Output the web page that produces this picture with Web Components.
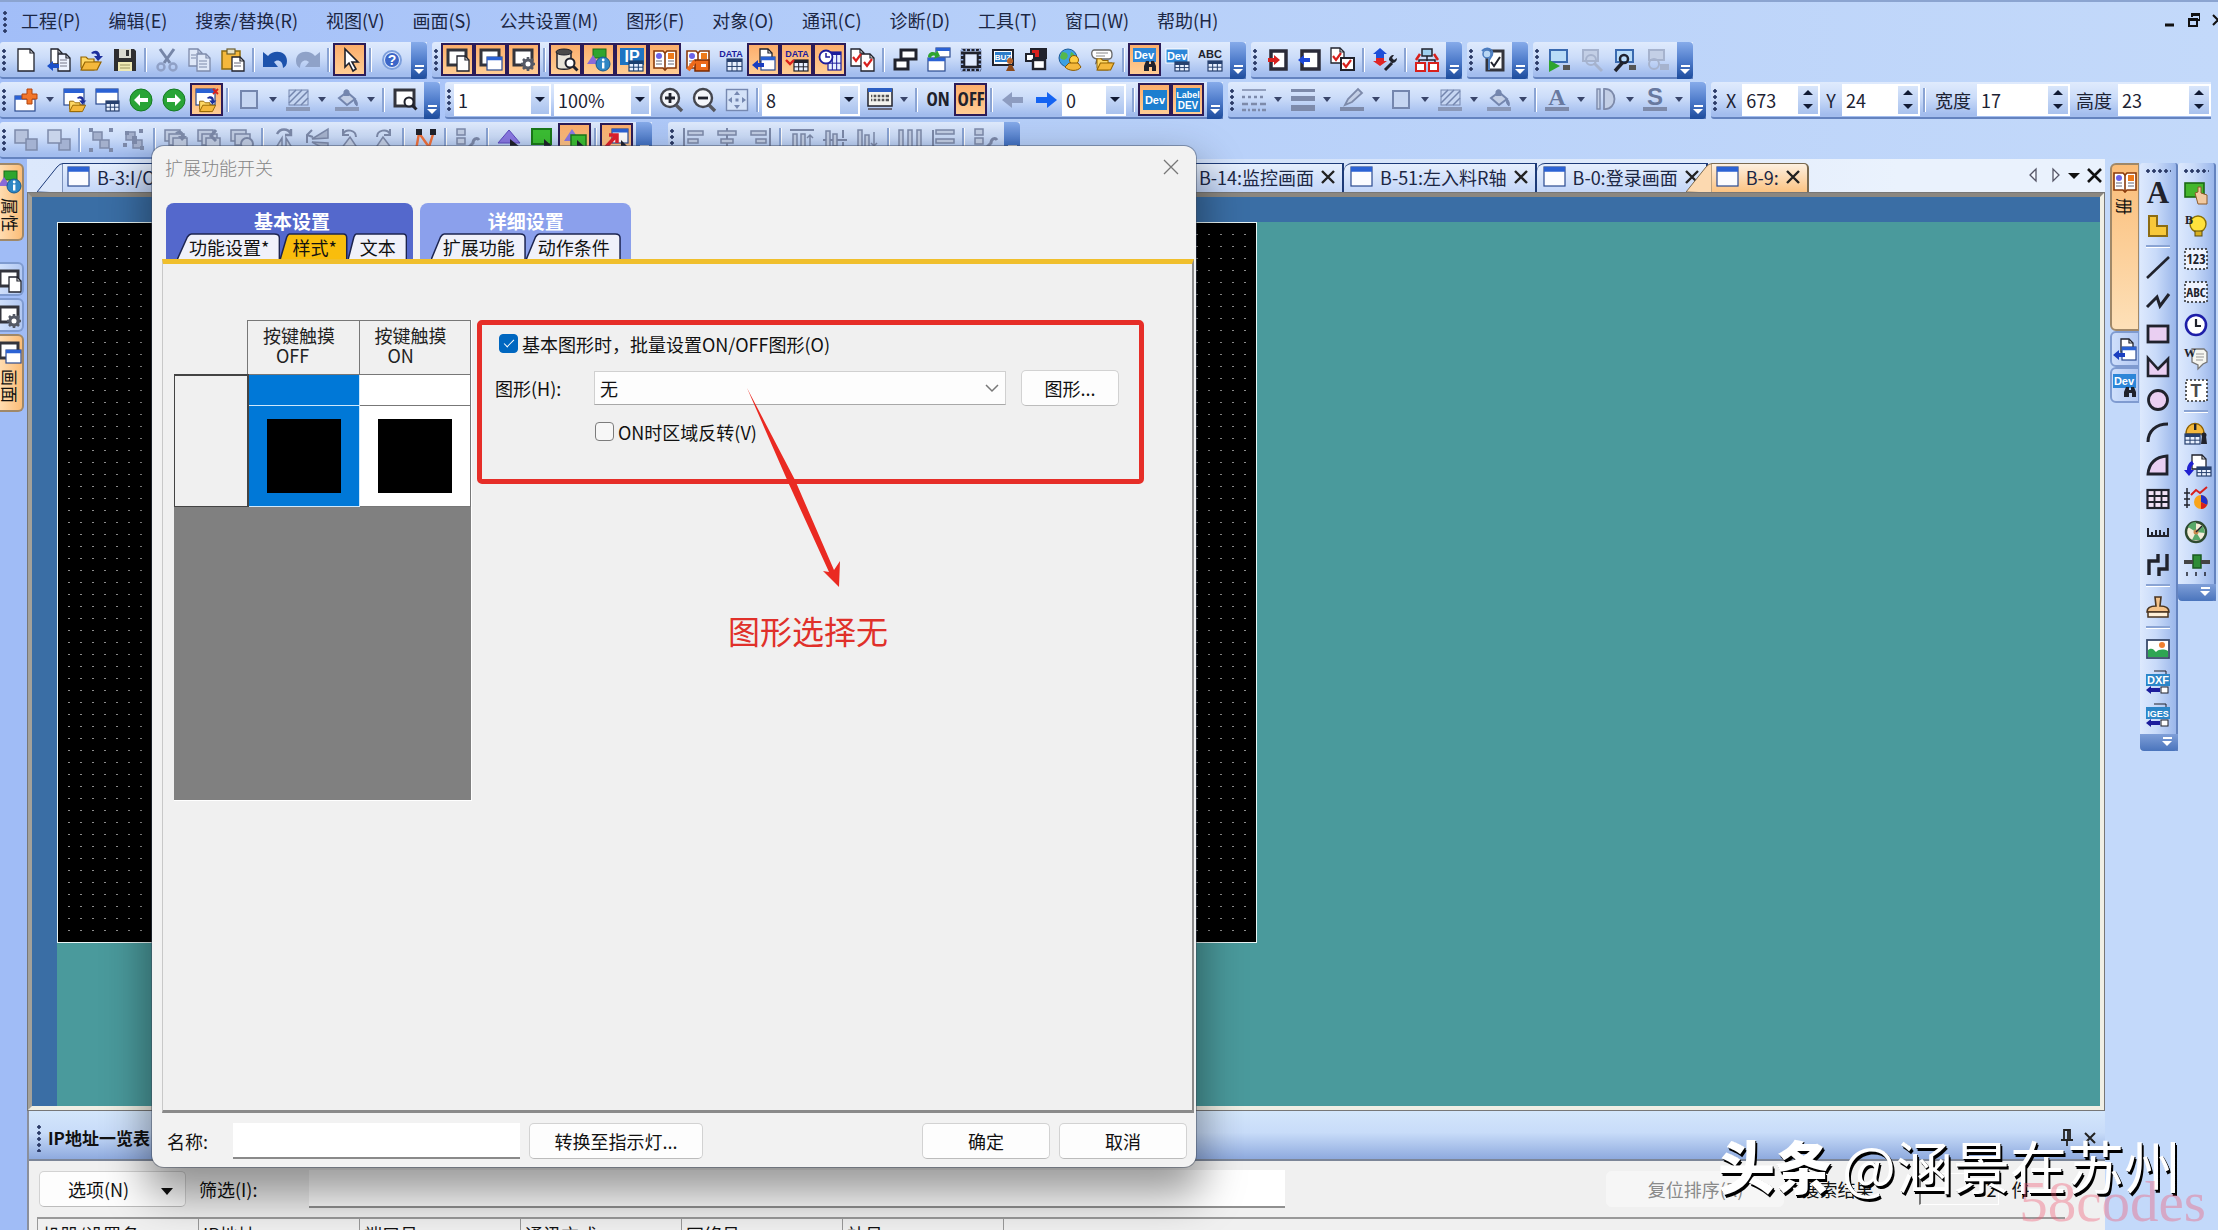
<!DOCTYPE html>
<html lang="zh-CN">
<head>
<meta charset="utf-8">
<title>扩展功能开关</title>
<style>
  html, body { height: 100%; margin: 0; }
  body {
    overflow: hidden;
    font: 18px/24px "Noto Sans CJK SC", "Noto Sans", sans-serif;
    color: #1c2233;
  }
</style>
</head>
<body>
<gx-app></gx-app>

<script>
// ---------- icons, all on a 24 x 24 grid ----------
const K = '#20222c', G = '#7d8aaa', LG = '#c3cfe6', B = '#2b62d4', N = '#1c1c9c', O = '#f4b83c', R = '#d8201c', V = '#2ea52e', W = '#fff';

const r = (x, y, w, h, f = 'none', s = 'none', sw = 1.5) =>
  `<rect x="${x}" y="${y}" width="${w}" height="${h}" fill="${f}" stroke="${s}" stroke-width="${sw}"/>`;
const p = (d, f = 'none', s = 'none', sw = 1.5) =>
  `<path d="${d}" fill="${f}" stroke="${s}" stroke-width="${sw}"/>`;
const c = (x, y, q, f = 'none', s = 'none', sw = 1.5) =>
  `<circle cx="${x}" cy="${y}" r="${q}" fill="${f}" stroke="${s}" stroke-width="${sw}"/>`;
const t = (x, y, size, f, s, extra = '') =>
  `<text x="${x}" y="${y}" font-size="${size}" fill="${f}" font-weight="700" text-anchor="middle" ${extra}>${s}</text>`;

const page = (x, y, w, h, s = K, f = W) => p(`M${x} ${y}h${w - 4}l4 4v${h - 4}h-${w}z`, f, s, 1.3) + p(`M${x + w - 4} ${y}v4h4`, 'none', s, 1.2);
const win = (x, y, w, h, s = '#2a4a90', f = W, bar = B) => r(x, y, w, h, f, s, 1.2) + r(x, y, w, Math.max(3, h / 4), bar);
const grid = (x, y, w, h, s = '#27406e', f = '#e8f0ff') => r(x, y, w, h, f, s, 1.2) + r(x, y, w, 3, s) +
  p(`M${x + w / 3} ${y}v${h}M${x + w * 2 / 3} ${y}v${h}M${x} ${y + h * .62}h${w}`, 'none', s, 1);
const folder = (x, y) => p(`M${x} ${y + 11}v-10h5l2 2h6v3h4l-4 8h-12z`, '#ffd966', '#946400', 1.2) + p(`M${x} ${y + 14}l4-8h16l-4 8z`, O, '#946400', 1.2);
const swoop = p('M11 5c4-4 9-2 9 3h3l-5 5-4-5h3c0-2-2-3-4-2z', '#1d2f9c');
const lens = (x, y, q, s = K) => c(x, y, q, W, s, 2) + p(`M${x + q - 1} ${y + q - 1}l4 4`, 'none', s, 3);
const dark = (x, y, w, h) => r(x, y, w, h, W, '#33343c', 3);
const gear = (x, y, s = '#555a66') => c(x, y, 4, W, s, 3) + p(`M${x} ${y - 7}v3M${x} ${y + 4}v3M${x - 7} ${y}h3M${x + 4} ${y}h3M${x - 5} ${y - 5}l2 2M${x + 3} ${y + 3}l2 2M${x + 5} ${y - 5}l-2 2M${x - 3} ${y + 3}l-2 2`, 'none', s, 2.6);
const wrench = (s = K) => p('M12 22l7-7', 'none', s, 3) + p('M16 12c0-3 2-5 5-5l-2 3 2 2 3-2c0 4-3 5-5 5z', s);
const arrowL = (x, y, f = N) => p(`M${x} ${y}l6-5v3h6v4h-6v3z`, f);
const arrowR = (x, y, f = R) => p(`M${x} ${y}l-6-5v3h-6v4h6v3z`, f);
const tick = (x, y) => p(`M${x} ${y}l3 4 5-7`, 'none', R, 2.2);
const finder = (x, y) => p(`M${x} ${y + 10}v-5l2-5h3v3h2v-3h3l2 5v5h-4v-4h-3v4z`, K);
const info = c(16, 16, 7, '#2f86c4', '#155a90', 1) + r(15, 14.5, 2.4, 6, W) + c(16.2, 12, 1.4, W);
const hatch = (s, f) => r(3, 2, 19, 15, f, s, 1) + p('M3 9l7-7M3 15l13-13M8 17l14-14M15 17l7-7', 'none', s, 1.5);
const bucket = s => p('M4 10l8-6 8 7-8 6z', LG, s, 2) + p('M9 8V4c0-3 5-3 5 0v4M19 10c3 2 4 6 3 8-2-1-3-4-3-8z', s, s, 1);
const bar = s => r(0, 19, 24, 4, s);
const book = (x = 0, y = 0) => `<g transform="translate(${x} ${y})">` + p('M1 3h9l2 2 2-2h9v17h-9l-2 2-2-2H1z', W, '#8a3a0a', 1.6) + p('M12 5v16', 'none', '#8a3a0a', 1.6) + c(6, 8, 3, '#6b64e8') + r(15, 5, 6, 6, '#ee7a1a') + p('M3 13h6M3 16h6M15 13h6M15 16h6', 'none', '#667', 1) + '</g>';
const nodes = p('M4 4h9v8H4zM11 12h9v8h-9z', '#a4b0cc', G);

const ICONS = {
  new: page(4, 1, 16, 22),
  transfer: page(4, 1, 11, 15) + page(11, 6, 12, 17, K, '#eef3ff') + p('M13 12h7M13 15h7M13 18h7', 'none', '#778', 1) + arrowL(0, 18, '#1b50c8'),
  open: folder(1, 8) + swoop,
  save: p('M1 1h20l2 2v20H1z', '#2e2e30') + r(6, 1, 12, 9, '#d9d9d0') + r(13, 2, 3, 6, '#2e2e30') + r(5, 14, 14, 9, '#efe9b4') + p('M7 17h10M7 20h10', 'none', '#9a9460', 1),
  cut: p('M5 1l10 14M19 1L9 15', 'none', '#7686a8', 3) + c(6, 19, 3.5, 'none', '#8fa0c6', 2.4) + c(18, 19, 3.5, 'none', '#8fa0c6', 2.4),
  copy: page(1, 1, 13, 17, G, '#dfe8f8') + page(9, 6, 13, 17, G, '#dfe8f8') + p('M11 13h8M11 16h8M11 19h8M3 7h5M3 10h5', 'none', G, 1),
  paste: r(1, 3, 18, 18, O, '#8d6c12', 1.5) + r(6, 1, 8, 5, '#e6e2c8', '#6a5c2c', 1.2) + page(11, 9, 12, 14) + p('M13 15h7M13 18h7', 'none', '#667', 1),
  undo: p('M0 4l5 4c6-7 19-5 19 5 0 4-2 6-4 7 0-8-6-9-9-6l4 5H0z', '#1c52ac'),
  redo: p('M24 4l-5 4C13 1 0 3 0 13c0 4 2 6 4 7 0-8 6-9 9-6l-4 5h15z', '#8fa2c8'),
  cursor: p('M7 1v18l4-4 4 8 3-2-4-7h6z', W, K, 1.6),
  help: c(12, 12, 9, '#dce8fb', '#7d9fdc', 2) + c(12, 12, 7, '#3c66c8') + t(12, 17, 14, W, '?'),
  winPage: dark(2, 2, 18, 15) + page(11, 8, 12, 15),
  winWin: dark(2, 2, 18, 15) + win(8, 9, 15, 13),
  winGear: dark(2, 2, 18, 15) + gear(16, 16),
  dbFind: p('M3 4v15c0 3 14 3 14 0V4', '#e7e3d8', K, 1.5) + `<ellipse cx="10" cy="4" rx="8" ry="3" fill="#4a4a4a" stroke="${K}"/>` + lens(16, 15, 4.5),
  props: r(6, 1, 13, 9, V, '#1a6a1a', 1) + p('M0 16l6-9 6 9z', '#8a6ad8') + info,
  ip: r(0, 0, 24, 17, '#1f74c2') + t(12, 14, 16, W, 'IP') + grid(9, 13, 14, 10, '#1a3f70'),
  book: book(),
  bookParts: book() + r(9, 12, 14, 11, '#ee6a1a', '#7a2a00') + p('M2 22l7-9', 'none', '#ee6a1a', 4) + r(15, 16, 5, 3, W),
  data: t(12, 9, 9, N, 'DATA') + grid(8, 11, 15, 12),
  dataOut: page(8, 1, 12, 13) + win(9, 9, 14, 13) + arrowL(0, 17, '#1b3fc0'),
  dataCheck: t(12, 9, 9, N, 'DATA') + grid(9, 12, 14, 11, K) + p('M1 12l4 4 4-4', 'none', R, 2.4),
  dataClock: grid(10, 4, 13, 18, N) + c(8, 9, 6.5, W, N, 1.8) + p('M8 5v4h4', 'none', N, 1.5),
  checks: page(0, 1, 13, 17) + page(10, 6, 13, 17) + tick(2, 9) + tick(13, 14),
  cascade: r(8, 2, 15, 9, W, K, 3) + r(2, 12, 13, 9, W, K, 3),
  swap: win(10, 0, 14, 9) + win(2, 10, 17, 13) + p('M2 9c0-5 5-6 8-4l1-3 3 6-6 3 1-3c-2-1-4 0-4 2z', V),
  chip: r(5, 5, 14, 14, '#e2ecff', K, 2.6) + p('M3 2v20M21 2v20M2 2h20M2 22h20', 'none', K, 2.4) + '<path d="M3 2v20M21 2v20M2 2h20M2 22h20" fill="none" stroke="#9ab4ea" stroke-width="2.6" stroke-dasharray="1.5 3"/>',
  buzzer: r(1, 2, 20, 15, W, K, 2) + r(3, 4, 16, 10, '#2c7cc8') + t(11, 12, 8, W, 'BUZ') + c(18, 13, 3, '#b8642a') + p('M14 23l3-6h3l3 6', '#8c4a1a'),
  blocks: r(6, 1, 15, 9, R, K, 2) + r(14, 1, 7, 9, K) + r(1, 6, 8, 7, W, K, 2) + r(8, 12, 12, 9, W, K, 2.4),
  globe: c(10, 10, 9, '#3da0e0', '#1c5a98', 1) + p('M4 4c5 0 7 3 5 6s-6 2-7-1zM13 4c3 1 4 4 3 6l-4-2z', '#55b84a') + c(16, 12, 4.5, '#ffce42', '#8a5a00', 1) + p('M7 19c3 4 13 5 16 0l-3-4h-9z', O, '#8a5a00', 1),
  speech: p('M3 2h15c4 0 4 9 0 9h-8l-5 4 1-4C-1 10 0 2 3 2z', W, '#666', 1.3) + p('M5 5h12M5 8h9', 'none', '#888', 1) + `<g transform="translate(6 10) scale(.85)">${folder(0, 0)}</g>`,
  devFind: r(0, 0, 23, 14, '#2c86d8') + t(11, 11, 11, W, 'Dev') + finder(11, 13),
  devTable: r(0, 1, 22, 14, '#2c86d8', W, 1) + t(11, 12, 11, W, 'Dev') + grid(9, 14, 14, 9),
  abcTable: t(11, 10, 11, K, 'ABC') + grid(9, 13, 14, 10),
  redIn: r(6, 3, 15, 18, W, '#2b2b38', 3.5) + arrowR(15, 12),
  blueOut: r(4, 3, 17, 18, W, '#2b2b38', 3.5) + arrowL(0, 12, '#1d48d8'),
  checkSet: page(0, 0, 13, 15) + r(10, 10, 13, 12, W, K, 2) + tick(2, 8) + tick(12, 15),
  updown: p('M7 0l7 6h-3v4H3V6H0z', '#1e4fd8') + p('M7 18l7-5h-3v-3H3v3H0z', '#e02424') + wrench(),
  network: r(7, 1, 10, 7, '#9fd0f0', K) + p('M12 8v5M4 15v-3h16v3', 'none', K, 1.5) + r(1, 15, 9, 8, W, R, 2) + r(14, 15, 9, 8, W, R, 2) + p('M5 6L1 12M19 6l4 6', 'none', R, 2.5),
  verify: dark(6, 3, 16, 19) + p('M1 3c4-4 12-3 10 4l-3 5v10', 'none', '#4a7cc0', 2) + c(6, 6, 4, '#b8d6f4', '#4a7cc0') + p('M10 14l3 4 6-9', 'none', K, 2),
  simRun: r(3, 2, 17, 12, '#b9dcf8', '#3a6ab0', 2) + p('M2 12l11 6-11 6z', V) + r(16, 17, 7, 5, '#555'),
  simFind: r(3, 2, 15, 11, LG, '#a6b3ce', 2) + c(11, 12, 5, 'none', '#a6b3ce', 2) + p('M14 15l8 8', 'none', '#a6b3ce', 3),
  simTool: r(3, 2, 17, 12, '#b9dcf8', '#3a6ab0', 2) + p('M2 23l8-9', 'none', K, 3.5) + c(11, 11, 4, 'none', K, 2.5) + r(16, 17, 7, 5, '#555'),
  simData: r(3, 2, 15, 10, LG, '#a6b3ce', 2) + c(8, 16, 5, 'none', '#a6b3ce', 2) + r(14, 16, 9, 6, '#a6b3ce'),

  addScreen: win(1, 8, 20, 15) + p('M13 1h5v5h5v5h-5v5h-5v-5H8V6h5z', '#f2762a', '#b3450c', 1),
  openScreen: win(1, 1, 20, 16) + `<g transform="translate(5 6) scale(.8)">${folder(2, 8)}${swoop}</g>`,
  gridScreen: win(0, 1, 22, 15) + grid(10, 13, 13, 10),
  back: c(12, 12, 11, '#29a436', '#157a22', 1) + p('M5 12l6-6v4h8v4h-8v4z', W),
  next: c(12, 12, 11, '#29a436', '#157a22', 1) + p('M19 12l-6-6v4H5v4h8v4z', W),
  closeScreen: win(1, 1, 19, 16) + `<g transform="translate(3 6) scale(.8)">${folder(2, 8)}${swoop}</g>` + p('M18 1l5 5M23 1l-5 5', 'none', R, 1.8),
  gRect: r(4, 3, 16, 17, '#c6d6f2', '#7486ae', 2),
  gHatch: hatch('#7486ae', '#c6d6f2') + bar('#8a98b8'),
  gBucket: bucket('#7486ae') + bar('#8a98b8'),
  winFind: dark(2, 2, 19, 16) + lens(16, 14, 4.5),
  zoomIn: c(11, 10, 9, '#f4f6fa', '#44464e', 2.4) + p('M17 17l6 6', 'none', '#55575f', 3.4) + p('M11 5v10M6 10h10', 'none', K, 2.8),
  zoomOut: c(11, 10, 9, '#f4f6fa', '#44464e', 2.4) + p('M17 17l6 6', 'none', '#55575f', 3.4) + p('M6 10h10', 'none', K, 2.8),
  fit: r(1.5, 1.5, 21, 21, '#d4e2f8', '#7688b0', 1.4) + p('M12 3l3 4H9zM12 21l3-4H9zM3 12l4-3v6zM21 12l-4-3v6z', '#7688b0') + r(10.5, 10.5, 3, 3, '#7688b0'),
  rows: r(0, 1, 24, 17, '#f4f4ee', K, 1.5) + r(0, 0, 24, 4, '#2c5fc4') + p('M3 8h18M3 12h18', 'none', '#555', 2.4) + '<path d="M5 6v9M9 6v9M13 6v9M17 6v9" stroke="#f4f4ee" stroke-width="1.4"/>' + r(0, 20, 24, 2, '#667'),
  on: t(12, 18, 19, K, 'ON', 'class="narrow"'),
  off: t(12, 18, 19, K, 'OFF', 'class="narrow"'),
  left: p('M1 12l10-8v5h11v6H11v5z', '#8d9cc0'),
  right: p('M23 12L13 4v5H2v6h11v5z', '#1463f2'),
  dev: r(0, 2, 24, 20, '#1c7fd0') + t(12, 16, 11, W, 'Dev'),
  labelDev: r(0, 0, 24, 24, '#1c7fd0') + t(12, 10, 9, W, 'Label') + t(12, 21, 10, W, 'DEV'),
  lineStyle: p('M0 2h24', 'none', G, 1.5) + '<path d="M0 9h24" stroke="#7d8aaa" stroke-width="2.4" stroke-dasharray="3 3"/><path d="M0 16h24" stroke="#7d8aaa" stroke-width="2.4" stroke-dasharray="6 3"/><path d="M0 22h24" stroke="#7d8aaa" stroke-width="2.4" stroke-dasharray="4 2 2 2"/>',
  lineWeight: r(0, 1, 24, 3, G) + r(0, 8, 24, 5, G) + r(0, 17, 24, 6, G),
  gPen: p('M5 17l3-6L18 1l4 4-10 9z', LG, G, 1.8) + bar(G),
  gText: t(12, 17, 24, '#68799f', 'A', 'class="serif"') + bar(G),
  gDeco: r(3, 1, 3, 20, LG, G, 1.4) + p('M10 1c14-1 14 21 0 20z', LG, G, 1.8),
  gShade: t(12, 17, 24, '#68799f', 'S') + bar(G),

  front: r(1, 2, 13, 13, '#b6c2dc', G) + r(12, 11, 11, 11, '#a4b2d2', G),
  backward: r(12, 11, 11, 11, '#a4b2d2', G) + r(1, 2, 13, 13, '#c8d4ea', G),
  group: nodes + p('M0 0h4v4H0zM20 0h4v4h-4zM0 20h4v4H0zM20 20h4v4h-4z', G),
  ungroup: nodes + p('M3 3h4v4H3zM17 1h4v4h-4zM1 15h4v4H1zM18 18h4v4h-4zM10 8h5v8h-5z', G),
  layer1: r(1, 2, 15, 11, LG, G) + r(5, 6, 15, 11, LG, G) + r(9, 10, 14, 12, LG, G) + swoop.replace('#1d2f9c', '#7f8dad'),
  layer2: r(1, 2, 15, 11, LG, G) + r(5, 6, 15, 11, LG, G) + r(9, 10, 14, 12, LG, G) + p('M19 2l-5 6 5 5', 'none', G, 3),
  layer3: r(1, 2, 15, 11, LG, G) + r(5, 6, 15, 11, LG, G) + c(17, 16, 6, LG, G, 2),
  flipH: p('M10 10v13H2zM14 10v13h8z', LG, G) + p('M5 6c3-6 11-6 14 0M19 1v6h-6', 'none', G, 2.4),
  flipV: p('M7 11L23 1v9zM7 14l16 9v-8z', '#a8b5d0', G) + p('M7 2L2 7v8M2 7l6 2', 'none', G, 2),
  rotL: p('M3 21L12 9l8 12z', LG, G) + p('M18 9c0-7-10-9-13-3M5 1v6h6', 'none', G, 2),
  rotR: p('M21 21L12 9 4 21z', LG, G) + p('M6 9c0-7 10-9 13-3M19 1v6h-6', 'none', G, 2),
  poly: p('M3 22L6 5l10 14 5-16', 'none', '#f0713c', 2.4) + r(3, 1, 6, 6, K) + r(17, 1, 6, 6, K),
  proc: r(2, 1, 8, 6, LG, G) + r(2, 10, 8, 6, LG, G) + r(2, 19, 8, 4, LG, G) + p('M13 20l5-5c0-4 4-6 6-3', 'none', G, 3),
  tri: p('M1 15L12 2l11 13z', '#8b79e4', '#5d4bc0', 1) + p('M13 11v12l10-4z', K),
  square: r(2, 1, 19, 15, '#3cc034', '#1a7a18', 2) + p('M14 11v12l9-4z', K),
  triSquare: p('M1 13L9 1l8 12z', '#8b79e4') + r(8, 7, 15, 12, '#3cc034', '#1a7a18') + p('M14 12v12l9-4z', K),
  jump: win(7, 1, 16, 14) + p('M1 19L11 8M4 7h8v8', 'none', '#e0202c', 3.5) + p('M16 12v12l8-4z', K),
  alL: p('M2 0v24', 'none', G, 2) + r(6, 3, 15, 4, LG, G) + r(6, 11, 10, 4, LG, G),
  alC: p('M12 0v24', 'none', G, 2) + r(3, 3, 18, 4, LG, G) + r(6, 11, 12, 4, LG, G),
  alR: p('M22 0v24', 'none', G, 2) + r(3, 3, 15, 4, LG, G) + r(8, 11, 10, 4, LG, G),
  alT: p('M0 2h24', 'none', G, 2) + r(3, 6, 4, 16, LG, G) + r(11, 6, 4, 16, LG, G) + p('M20 20V7M17 10l3-3 3 3', 'none', G),
  alM: p('M0 12h24', 'none', G, 2) + r(3, 3, 4, 18, LG, G) + r(10, 6, 4, 12, LG, G) + p('M20 2v8M20 22v-8', 'none', G, 2),
  alB: r(2, 2, 4, 18, LG, G) + r(9, 7, 4, 13, LG, G) + p('M18 4v14M15 15l3 3 3-3', 'none', G) + p('M0 22h24', 'none', G, 2),
  disH: r(1, 2, 4, 20, LG, G) + r(10, 2, 4, 20, LG, G) + r(19, 2, 4, 20, LG, G),
  disV: r(5, 2, 18, 4, LG, G) + r(5, 11, 18, 4, LG, G) + p('M2 2v20', 'none', G, 2),

  text: t(12, 22, 31, K, 'A', 'class="serif"'),
  ell: p('M3 2h8v10h10v10H3z', '#f8c83a', '#8d6c12', 2),
  line: p('M1 22L23 1', 'none', K, 2.6),
  zig: p('M1 18L11 8l3 9L23 5', 'none', K, 3),
  rect: r(2, 4, 20, 16, '#eacff2', K, 2.8),
  polygon: p('M2 3v18h20V4L12 14z', '#eacff2', K, 2.6),
  circle: c(12, 12, 9.5, '#eacff2', K, 2.8),
  arc: p('M2 21C2 10 10 3 22 3', 'none', K, 3),
  sector: p('M2 20C3 9 10 3 21 2v18z', '#eacff2', K, 2.8),
  table: r(1.5, 3, 21, 18, '#f2e2f6', K, 2.2) + p('M8.500 3v18M15.500 3v18M1 9h22M1 15h22', 'none', K, 1.8),
  ruler: p('M2 8v8h20V8M6 16v-4M10 16v-6M14 16v-6M18 16v-4', 'none', K, 2),
  pipe: p('M12 1v7H3v14M21 1v15h-8v7', 'none', K, 3.4),
  stamp: p('M9 2h6l-1 9c6 0 9 2 9 6H1c0-4 3-6 9-6z', '#f5c38a', '#4a3520', 1.6) + r(2, 17, 20, 5, '#fff0d8', '#4a3520', 1.5),
  photo: r(1, 3, 22, 18, W, '#3a4a6a', 1.8) + p('M2 20v-7c4-3 6 0 8 2 3-3 8-3 12-1v6z', '#2ea552') + c(16, 8, 3, '#f08030'),
  dxf: r(0, 4, 24, 12, '#2c86c8') + t(12, 14, 11, W, 'DXF') + p('M8 1h12v3', 'none', K, 1) + p('M0 20l5-4v2h9v4H5v2z', N) + r(15, 17, 7, 6, W, K, 1),
  iges: r(0, 4, 24, 12, '#2c86c8') + t(12, 14, 9, W, 'IGES') + p('M8 1h12v3', 'none', K, 1) + p('M0 20l5-4v2h9v4H5v2z', N) + r(15, 17, 7, 6, W, K, 1),
  touch: r(1, 2, 19, 14, '#44b62c', '#1c6a14', 1.6) + p('M11 12l3-1V6h3v6l6 2v9H14z', '#f2c9a0', '#8d5a2a', 1),
  lamp: c(14, 10, 8, '#ffe23c', '#8c7000', 1.4) + r(11, 17, 7, 5, '#d8b020', '#5a4a10', 1) + t(5, 10, 12, K, 'B', 'class="serif"'),
  num: '<rect x="1" y="2" width="22" height="20" fill="#eef3ff" stroke="#222" stroke-width="1.4" stroke-dasharray="2 2"/>' + t(12, 17, 14, K, '123', 'class="narrow"'),
  abc: '<rect x="1" y="2" width="22" height="20" fill="#eef3ff" stroke="#222" stroke-width="1.4" stroke-dasharray="2 2"/>' + t(12, 17, 13, K, 'ABC', 'class="narrow light"'),
  clock: c(12, 12, 10, W, '#1e1ea8', 2.6) + p('M12 6v7h5', 'none', K, 2.2),
  word: p('M8 3h12l3 3v10l-4 2-5 5v-4l-6-3z', '#f6f6f0', '#777', 1.3) + p('M12 8h8M12 11h8M12 14h7', 'none', '#999', 1) + t(6, 11, 12, K, 'W', 'class="serif"'),
  tbox: '<rect x="2" y="1" width="21" height="21" fill="#fff" stroke="#333" stroke-width="1.6" stroke-dasharray="2 2"/>' + t(12, 18, 18, '#4a4a4a', 'T'),
  alarm: p('M2 13C2-1 20-1 20 13z', O, '#8d6000', 1.4) + r(10, 3, 2.4, 6, K) + grid(1, 13, 15, 10) + c(20, 14, 2.5, K) + p('M17 23l1-8h4l1 8z', K),
  recipe: page(8, 1, 14, 14) + grid(13, 13, 14, 9) + p('M8 7c-4 2-5 6-5 9H0l5 6 5-6H7c0-3 1-5 3-6z', '#2020d0'),
  chart: p('M3 1v20M0 6h6M0 12h6M0 18h6', 'none', K, 1.5) + p('M7 8l5-5 4 3 7-6', 'none', R, 2) + c(17, 15, 7, '#f8a41c') + p('M17 15V8a7 7 0 0 1 6 10z', '#2030c8') + p('M17 15l6 3a7 7 0 0 1-6 4z', R),
  meter: c(12, 12, 10, '#f4edd8', '#2e4a30', 2.4) + p('M12 12L4 7a9 9 0 0 1 8-5zM12 12l7-6 2 7zM12 12l5 8-9 0z', '#58a868') + c(12, 12, 2.5, '#c88a4a') + p('M12 12l6-6', 'none', K, 1.5),
  slider: r(9, 2, 8, 13, '#2e8c36', '#1a5a20') + p('M0 9h9M17 9h9', 'none', '#444', 4) + p('M3 19v4M12 19v4M21 19v4', 'none', K, 1.5),
  doc: win(1, 2, 21, 19, '#2a4a90', '#fbfcff')
};

const define = (name, css, html, setup) => {
  const tpl = document.createElement('template');
  tpl.innerHTML = `<style>*{box-sizing:border-box}button,input,select{font:inherit;color:inherit;margin:0}${css}</style>${html}`;
  customElements.define(name, class extends HTMLElement {
    constructor() {
      super();
      this.attachShadow({ mode: 'open' }).appendChild(tpl.content.cloneNode(true));
    }
    connectedCallback() {
      if (setup && !this.ready) setup(this, this.shadowRoot);
      this.ready = true;
    }
  });
};

define('gx-icon', `
  :host { display: block; width: 24px; height: 24px; flex: none; }
  svg { display: block; width: 100%; height: 100%; overflow: visible; font-family: "Liberation Sans", sans-serif; }
  .narrow { font-family: "Liberation Sans Narrow", "Open Sans Condensed", "Roboto Condensed", "Liberation Sans", sans-serif; }
  .light { font-weight: 400; }
  .serif { font-family: "Liberation Serif", serif; }
`, '<svg viewBox="0 0 24 24" aria-hidden="true"></svg>', (el, root) => {
  root.querySelector('svg').innerHTML = ICONS[el.getAttribute('name')] || '';
});

// items: "name" button, "*name" pressed, "name+" with a drop-down arrow, "|" separator
define('gx-tools', `
  :host { display: contents; }
  button { width: 33px; height: 33px; padding: 0; border: 0; background: none; display: grid; place-items: center; flex: none; }
  button.on { background: linear-gradient(#fcae6c, #ffcd94); border: 2px solid #2c1c58; }
  button.dd { width: 16px; }
  button.dd::after { content: ""; border: 4px solid transparent; border-top: 5px solid #39456a; border-bottom: 0; }
  i { flex: none; width: 9px; display: grid; place-items: center; align-self: stretch; }
  i::after { content: ""; width: 2px; height: 24px; background: #8aa4d4; border-right: 1px solid #fff; }
  :host([vertical]) i { height: 9px; width: auto; }
  :host([vertical]) i::after { width: 24px; height: 2px; border: 0; border-bottom: 1px solid #fff; }
`, '', (el, root) => {
  el.getAttribute('items').split(/\s+/).forEach(item => {
    if (item === '|') return root.append(document.createElement('i'));
    const name = item.replace(/[*+]/g, '');
    const button = document.createElement('button');
    button.type = 'button';
    button.setAttribute('aria-label', name);
    if (item[0] === '*') button.className = 'on';
    button.innerHTML = `<gx-icon name="${name}"></gx-icon>`;
    root.append(button);
    if (item.endsWith('+')) {
      const more = document.createElement('button');
      more.className = 'dd';
      more.setAttribute('aria-label', name + ' menu');
      root.append(more);
    }
  });
});

define('gx-toolbar', `
  :host {
    display: flex; flex: none; align-items: center; height: 37px;
    background: linear-gradient(#e0ebfd, #cbdcf9 45%, #a3bdee 92%);
    border-bottom: 2px solid #6483bf; border-radius: 3px 0 0 3px;
  }
  .grip { flex: none; width: 9px; height: 24px; background: radial-gradient(circle at 4px 3px, #2b3a66 1.5px, transparent 2px) 0 0/9px 6px; }
  .more { flex: none; width: 16px; height: 37px; margin: 0 0 -2px 3px; display: flex; flex-direction: column; justify-content: flex-end; align-items: center; gap: 2px; padding: 0 0 5px; border: 0; border-radius: 0 4px 4px 0; background: linear-gradient(#86abea, #4a78c8 55%, #1d4c9c); }
  .more::before { content: ""; width: 9px; height: 2px; background: #fff; }
  .more::after { content: ""; border: 5px solid transparent; border-top-color: #fff; border-bottom: 0; }
  :host([plain]) .more { display: none; }
  :host([vertical]) {
    flex-direction: column; width: 38px; height: auto; padding: 5px 0 0; border: 0; border-right: 2px solid #6483bf;
    border-radius: 3px 3px 0 0; background: linear-gradient(90deg, #dde9fd, #c8daf9 45%, #9ab6ea);
  }
  :host([vertical]) .grip { width: 26px; height: 8px; background: radial-gradient(circle at 3px 3px, #2b3a66 1.5px, transparent 2px) 0 0/6px 9px; }
  :host([vertical]) .more { width: 38px; height: 17px; margin: 3px -2px 0 0; border-radius: 0 0 4px 4px; background: linear-gradient(#7f9fd8, #4a74bc); align-items: flex-end; padding-right: 6px; }
`, '<span class="grip"></span><slot></slot><button class="more" aria-label="more"></button>');

define('gx-combo', `
  :host { display: flex; flex: none; height: 32px; margin-right: 3px; background: #fff; align-items: center; padding-right: 2px; position: relative; }
  select { appearance: none; width: 100%; height: 32px; padding: 0 4px; border: 0; background: none; outline: 0; }
  .arrow { position: absolute; right: 2px; top: 2px; width: 18px; height: 28px; display: grid; place-items: center; background: linear-gradient(#d9e6fb, #a9c2ee); pointer-events: none; }
  .arrow::after { content: ""; border: 5px solid transparent; border-top-color: #111a33; border-bottom: 0; }
`, '<select></select><span class="arrow"></span>', (el, root) => {
  const select = root.querySelector('select');
  select.setAttribute('aria-label', el.getAttribute('label'));
  select.append(new Option(el.getAttribute('value')));
});

define('gx-spin', `
  :host { display: flex; flex: none; align-items: center; gap: 6px; padding-left: 6px; }
  span { display: flex; height: 32px; background: #fff; padding: 2px; }
  input { width: 54px; border: 0; padding: 0 2px; background: none; outline: 0; }
  :host([wide]) input { width: 69px; }
  b { width: 20px; display: flex; flex-direction: column; justify-content: space-around; align-items: center; background: linear-gradient(#d9e6fb, #a9c2ee); }
  b::before, b::after { content: ""; border: 5px solid transparent; border-top: 0; border-bottom-color: #111a33; }
  b::after { transform: rotate(180deg); }
`, '<label for="v"></label><span><input id="v"><b></b></span>', (el, root) => {
  root.querySelector('label').textContent = el.getAttribute('label');
  root.querySelector('input').value = el.getAttribute('value');
});

define('gx-menubar', `
  :host { display: flex; align-items: center; height: 42px; padding: 0 2px; border-top: 2px solid #8ba4d0; }
  .grip { width: 19px; height: 24px; background: radial-gradient(circle at 3px 3px, #2b3a66 1.5px, transparent 2px) 0 0/21px 6px; }
  nav { display: flex; gap: 28px; padding-bottom: 4px; white-space: nowrap; }
  a { color: #1c2744; text-decoration: none; }
  .win { margin-left: auto; display: flex; gap: 12px; margin-right: -8px; padding-bottom: 4px; }
  .win svg { width: 12px; height: 14px; }
`, `<span class="grip"></span><nav></nav>
  <span class="win">
    <svg viewBox="0 0 12 14"><path d="M1 12h9" stroke="#111" stroke-width="3"/></svg>
    <svg viewBox="0 0 12 14"><path d="M4 4V1h8v6H9M4 2h8M1 6h8v7H1zM1 7h8" fill="none" stroke="#111" stroke-width="2"/></svg>
    <svg viewBox="0 0 12 14"><path d="M1 2l10 10M11 2L1 12" stroke="#111" stroke-width="2"/></svg>
  </span>`, (el, root) => {
  root.querySelector('nav').innerHTML = el.getAttribute('items').split(' ').map(m => `<a href="#">${m}</a>`).join('');
});

define('gx-doctab', `
  :host { display: flex; flex: none; height: 29px; color: #1c2744; }
  .slant { display: none; width: 26px; height: 29px; }
  :host([slant]) .slant { display: block; }
  .slant path { fill: #dbe7fb; stroke: #1c3a78; }
  .body { flex: 1; display: flex; align-items: center; gap: 6px; padding: 0 6px 2px; white-space: nowrap; border: 1px solid #1c3a78; border-width: 1px 2px 0 0; border-top-left-radius: 8px; background: linear-gradient(#e6effd, #c3d6f8); }
  :host([slant]) .body { border-top-left-radius: 0; padding-left: 4px; }
  :host([active]) { margin-left: -22px; position: relative; }
  :host([active]) .body { background: linear-gradient(#fdf0e0, #fbc382); border-right-color: #7a6a50; border-top-color: #7a6a50; border-top-right-radius: 5px; }
  :host([active]) .slant path { fill: #fcd9b0; stroke: #7a6a50; }
  svg { flex: none; }
  button { border: 0; padding: 0; background: none; width: 16px; height: 16px; display: grid; }
`, `<svg class="slant" viewBox="0 0 26 29"><path d="M0 29L20 4Q23 .5 26 .5V30z" stroke-width="1"/></svg>
  <div class="body"><gx-icon name="doc"></gx-icon><slot></slot>
  <button aria-label="close"><svg width="16" height="16" viewBox="0 0 16 16"><path d="M2 2l12 12M14 2L2 14" stroke="#222" stroke-width="2.400"/></svg></button></div>`);

define('gx-docktab', `
  :host { display: flex; flex-direction: column; align-items: center; flex: none; gap: 4px; padding: 5px 2px; overflow: hidden; border: 2px solid #7f9bd0; border-left: 0; border-radius: 0 6px 6px 0; background: linear-gradient(90deg, #cfdffb, #b2c8f2); color: #111; }
  :host([active]) { background: linear-gradient(90deg, #ffdcb0, #fbbd78); border-color: #a08868; }
  :host([right]) { border-left: 2px solid #7f9bd0; border-right-width: 1px; border-radius: 6px 0 0 6px; }
  :host([right][active]) { border-left-color: #a08868; background: linear-gradient(#fbbd78, #fde0b8); }
  span { writing-mode: vertical-rl; text-orientation: sideways; line-height: 20px; font-size: 17px; }
`, '<gx-icon></gx-icon><span><slot></slot></span>', (el, root) => {
  const icon = document.createElement('gx-icon');
  icon.setAttribute('name', el.getAttribute('icon'));
  root.querySelector('gx-icon').replaceWith(icon);
});

define('gx-check', `
  :host { display: flex; align-items: center; height: 24px; }
  input { appearance: none; width: 19px; height: 19px; margin: 0 4px 2px 0; border: 1px solid #7c7c7c; border-radius: 4px; background: #f7f7f7; display: grid; place-items: center; }
  input:checked { background: #0067c0; border-color: #0067c0; }
  input:checked::before { content: ""; width: 9px; height: 4px; border: solid #fff; border-width: 0 0 1px 1px; transform: rotate(-45deg) translate(1px, -1px); }
  label { color: #111; white-space: nowrap; }
`, '<input type="checkbox" id="c"><label for="c"><slot></slot></label>', (el, root) => {
  root.querySelector('input').checked = el.hasAttribute('checked');
});

define('gx-button', `
  :host { display: block; flex: none; }
  button { width: 100%; height: 36px; padding: 0; border: 1px solid #d2d2d2; border-bottom-color: #bcbcbc; border-radius: 5px; background: #fdfdfd; color: #111; white-space: nowrap; }
  button:disabled { color: #8a8a8a; border-color: #f6f6f6; background: #f6f6f6; }
`, '<button type="button"><slot></slot></button>', (el, root) => {
  root.querySelector('button').disabled = el.hasAttribute('disabled');
});

// a coloured group of property pages in the dialog
define('gx-pagegroup', `
  :host { display: flex; flex-direction: column; align-items: center; justify-content: flex-end; height: 56px; flex: none; padding: 0 6px 0 11px; border-radius: 8px 8px 0 0; background: #5468cc; }
  :host([light]) { padding-right: 10px; background: #8ba0ec; }
  b { color: #fff; font-size: 19px; line-height: 24px; }
  div { display: flex; }
  button { position: relative; height: 26px; padding: 3px 11px 0 12px; border: 0; background: none; color: #111; line-height: 23px; white-space: nowrap; isolation: isolate; }
  svg { position: absolute; inset: 0; width: 100%; height: 100%; z-index: -1; }
  path { fill: #f0f1fa; stroke: #1c2450; stroke-width: 1.5; vector-effect: non-scaling-stroke; }
  .on path { fill: #f9bd0c; }
`, '<b></b><div role="tablist"></div>', (el, root) => {
  root.querySelector('b').textContent = el.getAttribute('label');
  root.querySelector('div').innerHTML = el.getAttribute('pages').split(' ').map(s =>
    `<button role="tab" class="${s[0] === '!' ? 'on' : ''}"><svg viewBox="0 0 100 26" preserveAspectRatio="none"><path d="M0 27L10 4q2-3 4-3h80q5 0 5 4v22"/></svg>${s.replace('!', '')}</button>`).join('');
});

define('gx-state-table', `
  :host { display: flex; flex-direction: column; width: 298px; height: 481px; background: linear-gradient(#f0f0f0 54px, #808080 54px); border: 1px solid #fff; border-width: 0 1px 1px 0; }
  table { border-collapse: collapse; table-layout: fixed; width: 297px; color: #222; }
  th, td { border: 1px solid #777; padding: 0; font-weight: 400; }
  thead th { height: 54px; padding: 4px 0 8px 15px; text-align: left; line-height: 20px; vertical-align: top; }
  thead span { display: block; padding-left: 13px; }
  thead td { border: 0; }
  tbody th { background: #f0f0f0; border: 2px solid #444; border-width: 2px 2px 1px 1px; }
  tbody td { background: #fff; }
  tbody .name td { height: 31px; }
  tbody .shape td { height: 101px; }
  tbody td.sel { background: #0078d7; border-color: #cfe8fb; }
  .shape div { width: 74px; height: 74px; margin: 0 auto; background: #000; }
`, `<table>
  <colgroup><col style="width:73px"><col><col></colgroup>
  <thead><tr><td></td><th>按键触摸<span>OFF</span></th><th>按键触摸<span>ON</span></th></tr></thead>
  <tbody>
    <tr class="name"><th rowspan="2"></th><td class="sel"></td><td></td></tr>
    <tr class="shape"><td class="sel"><div></div></td><td><div></div></td></tr>
  </tbody>
</table>`);

define('gx-dialog', `
  :host { position: absolute; left: 152px; top: 146px; width: 1044px; height: 1021px; display: flex; flex-direction: column; border-radius: 12px; background: #f2f2f2; box-shadow: 0 0 0 1px rgba(60,70,90,.45), 0 22px 44px 6px rgba(0,0,0,.4); color: #111; }
  header { display: flex; align-items: center; justify-content: space-between; height: 44px; margin-bottom: 13px; padding: 0 17px 2px 13px; color: #858585; font-weight: 300; }
  header button { border: 0; background: none; padding: 0; display: grid; }
  .groups { display: flex; gap: 7px; padding-left: 14px; }
  .page { flex: 1; margin: 0 2px 0 10px; padding: 56px 12px 0 11px; display: flex; align-items: flex-start; gap: 5px; border-top: 5px solid #f0bf2c; border-left: 1px solid #c8c8c8; border-right: 2px solid #8a8a8a; border-bottom: 3px solid #8a8a8a; background: #f0f0f0; position: relative; }
  .form { width: 667px; padding: 7px 20px 35px 13px; border: 5px solid #e62e28; border-radius: 5px; display: flex; flex-direction: column; gap: 14px; }
  .form gx-check { padding-left: 4px; }
  .form .sub { padding-left: 100px; }
  .row { display: flex; align-items: center; }
  .row label { width: 99px; }
  .sel { flex: 1; position: relative; margin-right: 15px; }
  select { appearance: none; width: 100%; height: 34px; padding: 0 5px; border: 1px solid #d0d0d0; border-bottom-color: #a8a8a8; background: #fdfdfd; }
  .sel svg { position: absolute; right: 7px; top: 13px; }
  .row gx-button { width: 98px; }
  .arrow { position: absolute; left: 584px; top: 124px; overflow: visible; pointer-events: none; }
  .note { position: absolute; left: 565px; top: 342px; font-size: 32px; line-height: 48px; color: #e0302a; }
  footer { display: flex; align-items: center; gap: 9px; height: 54px; padding: 1px 9px 0 15px; }
  footer label { width: 57px; }
  footer input { width: 287px; height: 36px; border: 0; border-bottom: 2px solid #8a8a8a; background: #fff; padding: 0 6px; }
  footer gx-button { width: 128px; }
  footer .wide { width: 174px; margin-right: auto; }
`, `<header><span>扩展功能开关</span>
    <button aria-label="close"><svg width="16" height="16" viewBox="0 0 16 16"><path d="M1 1l14 14M15 1L1 15" stroke="#777" stroke-width="1.300"/></svg></button></header>
  <div class="groups">
    <gx-pagegroup label="基本设置" pages="功能设置* !样式* 文本"></gx-pagegroup>
    <gx-pagegroup light label="详细设置" pages="扩展功能 动作条件"></gx-pagegroup>
  </div>
  <div class="page">
    <gx-state-table></gx-state-table>
    <div class="form">
      <gx-check checked>基本图形时，批量设置ON/OFF图形(O)</gx-check>
      <div class="row"><label for="shape">图形(H):</label>
        <span class="sel"><select id="shape"><option>无</option></select>
        <svg width="14" height="9" viewBox="0 0 14 9"><path d="M1 1l6 6 6-6" fill="none" stroke="#777" stroke-width="1.500"/></svg></span>
        <gx-button>图形...</gx-button></div>
      <gx-check class="sub">ON时区域反转(V)</gx-check>
    </div>
    <svg class="arrow" width="95" height="200" viewBox="0 0 95 200"><path d="M0 0L48 92 87 182l6-9-1 26-16-16 6 1L41 94z" fill="#ea2a22"/></svg>
    <span class="note">图形选择无</span>
  </div>
  <footer>
    <label for="name">名称:</label><input id="name">
    <gx-button class="wide">转换至指示灯...</gx-button>
    <gx-button>确定</gx-button><gx-button>取消</gx-button>
  </footer>`);

define('gx-iplist', `
  :host { display: flex; flex-direction: column; flex: 0 0 119px; overflow: hidden; background: #f0f0f0; border-left: 2px solid #8a8f9c; color: #111; }
  header { display: flex; align-items: center; flex: 0 0 50px; padding: 5px 8px 0; background: linear-gradient(#d3e6fb, #c8dcf9 45%, #8eaade); border-bottom: 2px solid #7c8698; font-weight: 700; font-size: 17px; }
  .grip { width: 11px; height: 28px; background: radial-gradient(circle at 2px 3px, #2b3a66 1.5px, transparent 2px) 0 0/12px 6px; }
  header svg { margin-left: 10px; }
  header svg:first-of-type { margin-left: auto; }
  .row { display: flex; align-items: center; height: 56px; flex: none; padding: 0 68px 1px 10px; white-space: nowrap; }
  .opt { width: 147px; margin-right: 13px; }
  .opt i { display: inline-block; margin: 0 -16px 2px 32px; border: 6px solid transparent; border-top: 7px solid #111; border-bottom: 0; }
  .row input { height: 38px; border: 0; border-bottom: 2px solid #909090; background: #fff; }
  #filter { width: 976px; margin: 0 321px 0 52px; }
  .reset { width: 178px; margin-right: 17px; }
  #found { width: 80px; margin: 0 12px 0 46px; height: 32px; background: #f0f0f0; border: 1px solid #fff; border-left: 2px solid #777; text-align: right; }
  table { border-collapse: collapse; table-layout: fixed; width: calc(100% - 48px); margin-left: 8px; flex: none; }
  th { width: 161px; height: 28px; padding: 2px 4px 0; border: 1px solid #999; border-width: 2px 0 0 1px; text-align: left; font-weight: 400; }
  th:last-child { width: auto; }
`, `<header><span class="grip"></span>IP地址一览表
    <svg width="12" height="18" viewBox="0 0 12 18"><path d="M3 1h6v10H3zM7 1v10M0 11h12M6 11v6" fill="none" stroke="#222" stroke-width="1.800"/></svg>
    <svg width="14" height="14" viewBox="0 0 14 14"><path d="M2 2l10 10M12 2L2 12" stroke="#222" stroke-width="2"/></svg></header>
  <div class="row">
    <gx-button class="opt">选项(N)<i></i></gx-button>
    <label for="filter">筛选(I):</label><input id="filter">
    <gx-button class="reset" disabled>复位排序(R)</gx-button>
    <label for="found">搜索结果</label><input id="found" value="2">件
  </div>
  <table><tr><th>机器/设置名</th><th>IP地址</th><th>端口号</th><th>通讯方式</th><th>网络号</th><th>站号</th><th></th></tr></table>`);

define('gx-app', `
  :host { display: flex; flex-direction: column; height: 100vh; overflow: hidden; position: relative; background: linear-gradient(90deg, #a2bef8, #b6cff9 45%, #c3d9fa); }
  .bars { display: flex; flex-direction: column; gap: 3px; }
  .bars > div { display: flex; gap: 5px; }
  .bars .third { gap: 16px; }
  gx-combo { width: 97px; }
  gx-combo.wide { width: 98px; }
  gx-combo.short { width: 64px; }
  main { flex: 1; min-height: 0; display: flex; }
  .left { width: 27px; padding: 4px 3px 0 0; display: flex; flex-direction: column; flex: none; gap: 2px; background: #a0bcf6; }
  .left gx-docktab:first-child { margin-bottom: 19px; }
  .tall { height: 78px; }
  .small { height: 34px; }
  .left gx-docktab { padding-right: 5px; }
  .center { flex: 1; min-width: 0; display: flex; flex-direction: column; }
  .tabs { display: flex; align-items: flex-end; height: 33px; padding-left: 10px; background: linear-gradient(90deg, #dce8fc, #c9dbf9 45%, #eaf2fd 90%); }
  .first { width: 1126px; }
  .nav { margin: 0 0 2px auto; align-self: center; }
  .doc { flex: 1; min-height: 0; padding: 25px 0 0 25px; border: 5px solid; border-color: #8b8780 #f0efe4 #f0efe4 #a3a19a; outline: 1px solid #777; outline-offset: -1px; background: linear-gradient(#3a6ea5, #3a6ea5) 0 0/25px 100% no-repeat, linear-gradient(#3a6ea5, #3a6ea5) 0 0/100% 25px no-repeat, #4a9a9c; }
  .screen { width: 1200px; height: 721px; border: 1px solid #e8f4f4; background: #000 radial-gradient(circle at 11px 12px, #8c8c8c 1px, transparent 1.5px) 0 0/12px 12px; }
  .right { display: flex; flex: none; width: 113px; overflow: hidden; padding: 4px 0 0 5px; align-items: flex-start; background: #c3d9fa; }
  .dock { display: flex; flex-direction: column; width: 29px; margin-right: 1px; }
  .dock .long { height: 168px; }
  .dock .small { height: 36px; }
  .mark { position: absolute; right: 37px; bottom: 26px; display: flex; gap: 10px; font-size: 57px; line-height: 80px; color: #fff; text-shadow: 2px 3px 0 #000, 1px 1px 0 #000; white-space: nowrap; }
  .mark b { font-weight: 900; }
  .codes { position: absolute; right: 12px; bottom: 0; font: 57px/56px "Liberation Serif", serif; color: #f0607a; opacity: .4; }
`, `
  <gx-menubar items="工程(P) 编辑(E) 搜索/替换(R) 视图(V) 画面(S) 公共设置(M) 图形(F) 对象(O) 通讯(C) 诊断(D) 工具(T) 窗口(W) 帮助(H)"></gx-menubar>
  <div class="bars">
    <div>
      <gx-toolbar><gx-tools items="new transfer open save | cut copy paste | undo redo | *cursor | help"></gx-tools></gx-toolbar>
      <gx-toolbar><gx-tools items="*winPage *winWin *winGear | *dbFind *props *ip *book bookParts data *dataOut *dataCheck *dataClock checks | cascade swap chip buzzer blocks globe speech | *devFind devTable abcTable"></gx-tools></gx-toolbar>
      <gx-toolbar><gx-tools items="redIn blueOut checkSet | updown | network"></gx-tools></gx-toolbar>
      <gx-toolbar><gx-tools items="verify"></gx-tools></gx-toolbar>
      <gx-toolbar><gx-tools items="simRun simFind simTool simData"></gx-tools></gx-toolbar>
    </div>
    <div>
      <gx-toolbar><gx-tools items="addScreen+ openScreen gridScreen back next *closeScreen | gRect+ gHatch+ gBucket+ | winFind"></gx-tools></gx-toolbar>
      <gx-toolbar>
        <gx-combo label="screen" value="1"></gx-combo><gx-combo label="zoom" value="100%"></gx-combo>
        <gx-tools items="zoomIn zoomOut fit |"></gx-tools>
        <gx-combo class="wide" label="grid" value="8"></gx-combo>
        <gx-tools items="rows+ | on *off | left right"></gx-tools>
        <gx-combo class="short" label="state" value="0"></gx-combo>
        <gx-tools items="| *dev *labelDev"></gx-tools>
      </gx-toolbar>
      <gx-toolbar><gx-tools items="lineStyle+ lineWeight+ gPen+ gRect+ gHatch+ gBucket+ | gText+ gDeco+ gShade+"></gx-tools></gx-toolbar>
      <gx-toolbar plain><gx-spin label="X" value="673"></gx-spin><gx-spin label="Y" value="24"></gx-spin><gx-tools items="|"></gx-tools><gx-spin wide label="宽度" value="17"></gx-spin><gx-spin wide label="高度" value="23"></gx-spin></gx-toolbar>
    </div>
    <div class="third">
      <gx-toolbar><gx-tools items="front backward | group ungroup | layer1 layer2 layer3 | flipH flipV rotL rotR | poly | proc | tri square *triSquare | *jump"></gx-tools></gx-toolbar>
      <gx-toolbar><gx-tools items="alL alC alR | alT alM alB | disH disV | proc"></gx-tools></gx-toolbar>
    </div>
  </div>
  <main>
    <div class="left">
      <gx-docktab class="tall" active icon="props">属性</gx-docktab>
      <gx-docktab class="small" icon="winPage"></gx-docktab>
      <gx-docktab class="small" icon="winGear"></gx-docktab>
      <gx-docktab class="tall" active icon="winWin">画面</gx-docktab>
    </div>
    <div class="center">
      <div class="tabs">
        <gx-doctab class="first" slant>B-3:I/O</gx-doctab>
        <gx-doctab>B-14:监控画面</gx-doctab>
        <gx-doctab>B-51:左入料R轴</gx-doctab>
        <gx-doctab>B-0:登录画面</gx-doctab>
        <gx-doctab slant active>B-9:</gx-doctab>
        <svg class="nav" width="76" height="16" viewBox="0 0 76 16"><path d="M7 2v12L1 8zM24 2v12l6-6z" fill="#f4f8ff" stroke="#556" stroke-width="1.300"/><path d="M39 6h12l-6 6z" fill="#111"/><path d="M59 2l13 13M72 2L59 15" stroke="#111" stroke-width="2.600"/></svg>
      </div>
      <div class="doc"><div class="screen"></div></div>
      <gx-iplist></gx-iplist>
    </div>
    <div class="right">
      <div class="dock">
        <gx-docktab class="long" right active icon="book">册</gx-docktab>
        <gx-docktab class="small" right icon="dataOut"></gx-docktab>
        <gx-docktab class="small" right icon="devFind"></gx-docktab>
      </div>
      <gx-toolbar vertical><gx-tools vertical items="text ell | line zig rect polygon circle arc sector table ruler pipe | stamp | photo dxf iges"></gx-tools></gx-toolbar>
      <gx-toolbar vertical><gx-tools vertical items="touch lamp num abc clock word tbox | alarm recipe chart meter slider"></gx-tools></gx-toolbar>
    </div>
  </main>
  <gx-dialog></gx-dialog>
  <div class="mark"><b>头条</b><span>@涵景在苏州</span></div>
  <div class="codes">58codes</div>
`);
</script>
</body>
</html>
